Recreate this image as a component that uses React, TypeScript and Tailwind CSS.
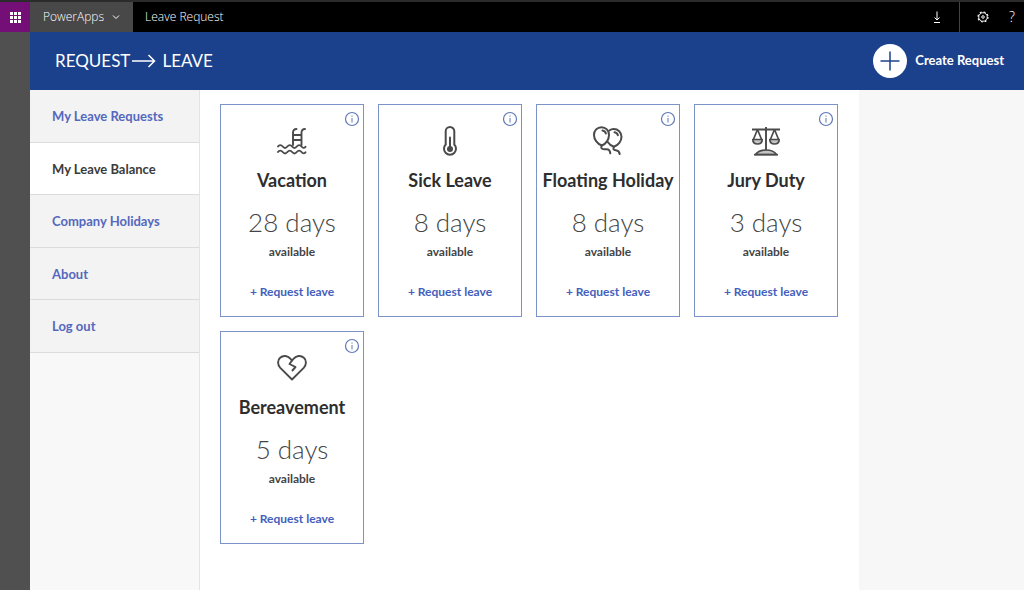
import type { ReactNode } from "react";

const PoolIcon = () => (
  <svg viewBox="0 0 32 32" className="h-8 w-8" fill="none" stroke="currentColor" strokeWidth="1.9" strokeLinecap="round">
    <path d="M17 20V7.500c0-2.500 1.200-3.500 3.500-3.500M25.500 20V7.500c0-2.500 1.200-3.500 3.500-3.500M17 10h8.500M17 15h8.500" />
    <path d="M2 21.500c1.200-1.900 3.200-1.900 4.700 0s3.200 1.900 4.700 0 3.200-1.900 4.700 0 3.200 1.900 4.700 0 3.200-1.900 4.700 0 2.800 1.700 4 .3" />
    <path d="M2 27c1.200-1.900 3.200-1.900 4.700 0s3.200 1.900 4.700 0 3.200-1.900 4.700 0 3.200 1.900 4.700 0 3.200-1.900 4.700 0 2.800 1.700 4 .3" />
  </svg>
);

const ThermometerIcon = () => (
  <svg viewBox="0 0 32 32" className="h-8 w-8" fill="none" stroke="currentColor" strokeWidth="2" strokeLinecap="round">
    <path d="M11.700 19.500V6.300a4.300 4.300 0 0 1 8.600 0v13.200a6 6 0 1 1-8.600 0z" />
    <path d="M16 12.500v11" />
    <circle cx="16" cy="24" r="3" fill="currentColor" stroke="none" />
  </svg>
);

const BalloonsIcon = () => (
  <svg viewBox="0 0 32 32" className="h-8 w-8" fill="none" stroke="currentColor" strokeWidth="2" strokeLinecap="round" strokeLinejoin="round">
    <path d="M9.800 20.500C5.500 19 2 14.500 2 10c0-4.500 3.200-7.800 7.500-7.800S17 5.500 17 10c0 4.500-3 9-7.200 10.500z" />
    <path d="M17.300 5.500c1.300-1 2.700-1.500 4.400-1.500 4.300 0 7.800 3.300 7.800 7.800 0 4.500-3.300 8.500-7.500 9.900-2.800-.8-5-2.500-6.500-4.900" />
    <path d="M10.500 5.500c1.800.2 3 1.300 3.400 3M22.500 7.300c1.800.2 3 1.300 3.400 3" />
    <path d="M9.800 20.500c-1.300 2.300-.3 3.800 2.400 3.800h2.500c2.300 0 3.300 1.500 3.600 4M22 21.700c-1.300 2.200-.5 3.300 1.800 3.500 2.500.2 3.500 1.300 3.900 3.800" />
  </svg>
);

const ScalesIcon = () => (
  <svg viewBox="0 0 32 32" className="h-8 w-8" fill="none" stroke="currentColor" strokeWidth="1.700" strokeLinejoin="round">
    <path d="M2 4.500h28M16 2v25" strokeWidth="1.900" />
    <path d="M7.500 4.500 3.200 15M7.500 4.500 11.800 15M24.500 4.500 20.200 15M24.500 4.500 28.800 15" />
    <path d="M2.800 14.500h9.400c0 3-2 4.500-4.700 4.500s-4.700-1.500-4.700-4.500zM19.800 14.500h9.400c0 3-2 4.500-4.700 4.500s-4.700-1.500-4.700-4.500z" fill="#c4c4c4" />
    <path d="M5.500 29.500c2-3 6-4.500 10.500-4.500s8.500 1.500 10.500 4.500z" fill="#c4c4c4" />
    <path d="M4 29.700h24" />
  </svg>
);

const BrokenHeartIcon = () => (
  <svg viewBox="0 0 32 32" className="h-8 w-8" fill="none" stroke="currentColor" strokeWidth="1.900" strokeLinejoin="round">
    <path d="M16 27.500 4.300 15.800c-3-3.200-2.900-7.600-.2-10 3-2.800 7.700-2.200 10.200.9L16 8.500l1.700-1.800c2.500-3.100 7.200-3.700 10.200-.9 2.700 2.400 2.800 6.800-.2 10z" />
    <path d="M16 8.500 13.500 12l6 3-3.500 4" />
  </svg>
);

const InfoIcon = () => (
  <svg viewBox="0 0 16 16" className="h-4 w-4" fill="none" stroke="currentColor">
    <circle cx="8" cy="8" r="6.500" strokeWidth="1.200" />
    <path d="M8 7v4.500M8 4.500v1.200" />
  </svg>
);

const GearIcon = () => (
  <svg viewBox="0 0 16 16" className="h-3 w-3" fill="none" stroke="currentColor">
    <circle cx="8" cy="8" r="5.700" strokeWidth="1.200" />
    <circle cx="8" cy="8" r="1.700" strokeWidth="1.300" />
    <circle cx="8" cy="8" r="6.700" strokeWidth="1.600" strokeDasharray="2.630 2.630" />
  </svg>
);

const navItems = [
  { label: "My Leave Requests", active: false },
  { label: "My Leave Balance", active: true },
  { label: "Company Holidays", active: false },
  { label: "About", active: false },
  { label: "Log out", active: false },
];

const balances = [
  { name: "Vacation", days: 28, icon: <PoolIcon /> },
  { name: "Sick Leave", days: 8, icon: <ThermometerIcon /> },
  { name: "Floating Holiday", days: 8, icon: <BalloonsIcon /> },
  { name: "Jury Duty", days: 3, icon: <ScalesIcon /> },
  { name: "Bereavement", days: 5, icon: <BrokenHeartIcon /> },
];

type BalanceCardProps = {
  name: string;
  days: number;
  icon: ReactNode;
};

const BalanceCard = ({ name, days, icon }: BalanceCardProps) => (
  <article className="relative flex h-[213px] w-36 flex-col items-center border border-[#7b93c9] pt-5 text-[#444]">
    <button aria-label={`About ${name}`} className="absolute top-1.5 right-[3px] text-[#6079b8]">
      <InfoIcon />
    </button>
    <span className="text-[#4a4a4a]">{icon}</span>
    <h2 className="mt-[11px] text-lg leading-6 font-bold whitespace-nowrap text-[#2e2e2e]">{name}</h2>
    <p className="mt-3 text-[26px] leading-9 font-light">{days} days</p>
    <p className="mt-1 text-xs leading-4 font-bold">available</p>
    <button className="mt-6 text-xs leading-4 font-bold text-[#4460bc]">+ Request leave</button>
  </article>
);

const TopBar = () => (
  <header className="flex h-8 items-stretch border-t-2 border-[#2b2b2b] bg-black font-['Open_Sans',sans-serif] text-xs font-light text-white">
    <button aria-label="App launcher" className="flex w-[30px] items-center justify-center bg-[#740f78]">
      <svg viewBox="0 0 11 11" className="h-[11px] w-[11px]" fill="currentColor">
        {[0, 4, 8].map((y) =>
          [0, 4, 8].map((x) => <rect key={`${x}-${y}`} x={x} y={y} width="3" height="3" />)
        )}
      </svg>
    </button>
    <button className="flex items-center gap-2 bg-[#484848] px-[13px]">
      PowerApps
      <svg viewBox="0 0 8 8" className="h-2 w-2" fill="none" stroke="currentColor">
        <path d="M1 2.500 4 5.500 7 2.500" />
      </svg>
    </button>
    <span className="flex items-center px-3">Leave Request</span>
    <div className="ml-auto flex">
      <button aria-label="Download" className="flex w-[45px] items-center justify-center border-r border-[#444]">
        <svg viewBox="0 0 12 12" className="h-3 w-3" fill="none" stroke="currentColor">
          <path d="M6 0.500v8.500M3.500 6.500 6 9l2.500-2.500M3 11.500h6" />
        </svg>
      </button>
      <button aria-label="Settings" className="flex w-[45px] items-center justify-center">
        <GearIcon />
      </button>
      <button aria-label="Help" className="pr-[9px] pl-1 text-sm">
        ?
      </button>
    </div>
  </header>
);

const App = () => {
  return (
    <div className="flex min-h-screen flex-col bg-white font-[Lato,sans-serif]">
      <TopBar />
      <div className="flex flex-1">
        <div className="w-[30px] bg-[#505050]" />
        <div className="flex flex-1 flex-col">
          {/* title bar */}
          <div className="flex h-[58px] items-center justify-between bg-[#1c418c] pr-5 pl-[25px] text-white">
            <h1 className="flex items-center text-[17px]">
              REQUEST
              <svg viewBox="0 0 26 14" className="h-3.5 w-[26px]" fill="none" stroke="currentColor" strokeWidth="1.500">
                <path d="M2 7h22.500M18.500 1l6 6-6 6" />
              </svg>
              <span className="ml-1.5">LEAVE</span>
            </h1>
            <button className="flex items-center gap-2 text-[13px] font-bold">
              <svg viewBox="0 0 34 34" className="h-[34px] w-[34px]">
                <circle cx="17" cy="17" r="17" fill="#fff" />
                <path d="M17 7.500v19M7.500 17h19" stroke="#1c418c" strokeWidth="1.500" />
              </svg>
              Create Request
            </button>
          </div>
          <div className="flex flex-1">
            <div className="w-[170px] border-r border-[#e4e4e4] bg-[#f8f8f8]">
              <nav className="grid h-[263px] grid-rows-5">
                {navItems.map((item) => (
                  <a
                    key={item.label}
                    href="#"
                    className={`flex items-center border-b border-[#dcdcdc] pt-0.5 pl-[22px] text-[13px] font-bold ${
                      item.active ? "bg-white text-[#3b3b3b]" : "bg-[#f3f3f3] text-[#5468bd]"
                    }`}
                  >
                    {item.label}
                  </a>
                ))}
              </nav>
            </div>
            <main className="flex flex-1 flex-wrap content-start gap-3.5 px-5 pt-3.5">
              {balances.map((item) => (
                <BalanceCard key={item.name} {...item} />
              ))}
            </main>
            <div className="w-[165px] bg-[#f7f7f7]" />
          </div>
        </div>
      </div>
    </div>
  );
};

export default App;
